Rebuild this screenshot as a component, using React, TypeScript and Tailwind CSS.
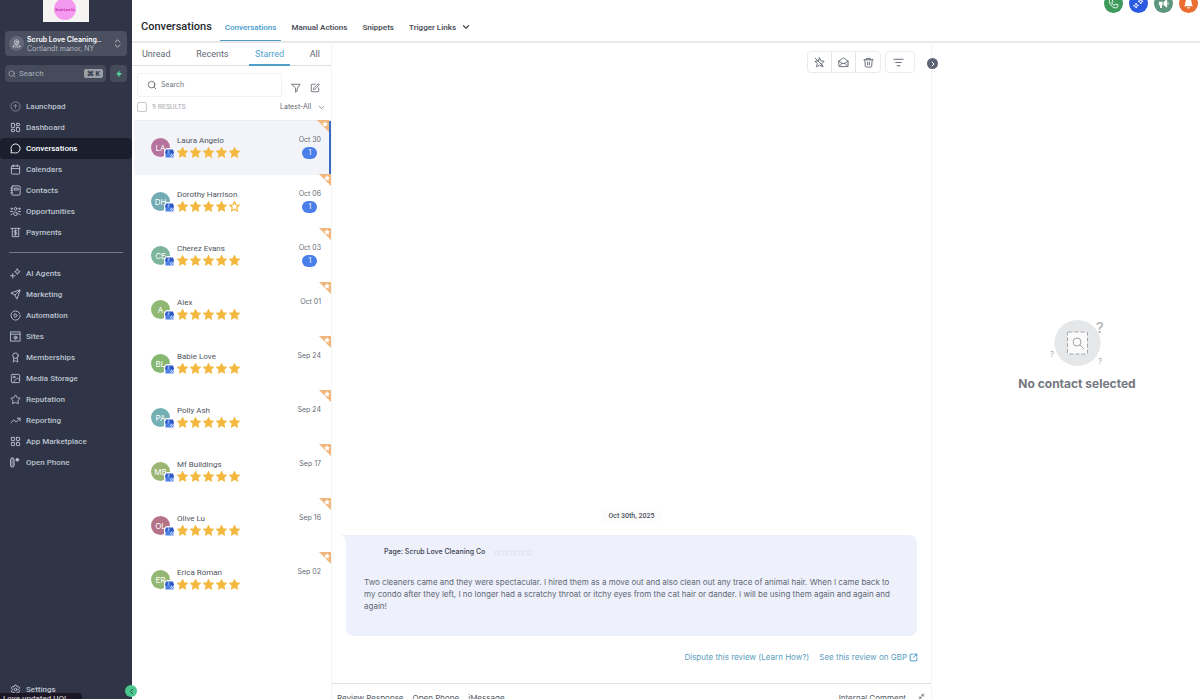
import type { ReactNode } from "react";
import {
  Award,
  Calendar,
  ChevronDown,
  ChevronLeft,
  ChevronRight,
  ChevronsUpDown,
  CircleArrowUp,
  CirclePlay,
  Image as ImageIcon,
  LayoutDashboard,
  LayoutGrid,
  MessageCircle,
  Minimize2,
  Search,
  Send,
  Settings,
  SquareArrowOutUpRight,
  SquarePen,
  Star,
  TrendingUp,
} from "lucide-react";

const starPath =
  "M12 1.8l3.1 6.6 7.1.9-5.2 5 1.3 7.2L12 18l-6.3 3.5L7 14.3l-5.2-5 7.1-.9z";

function Svg({ children, className = "size-[11px]" }: { children: ReactNode; className?: string }) {
  return (
    <svg
      viewBox="0 0 24 24"
      className={className}
      fill="none"
      stroke="currentColor"
      strokeWidth={2}
      strokeLinecap="round"
      strokeLinejoin="round"
      aria-hidden="true"
    >
      {children}
    </svg>
  );
}

const icon = "size-[11px]";

const mainNav = [
  {
    label: "Launchpad",
    icon: <CircleArrowUp className="size-[11px] opacity-60" strokeDasharray="14 2" />,
  },
  { label: "Dashboard", icon: <LayoutDashboard className={icon} /> },
  { label: "Conversations", icon: <MessageCircle className={icon} />, active: true },
  { label: "Calendars", icon: <Calendar className={icon} /> },
  {
    label: "Contacts",
    icon: (
      <Svg>
        <rect x="4" y="2" width="18" height="20" rx="2" />
        <path d="M2 7h4M2 12h4M2 17h4M10 7h8v4h-8z" />
      </Svg>
    ),
  },
  {
    label: "Opportunities",
    icon: (
      <Svg>
        <circle cx="12" cy="6" r="3" />
        <circle cx="12" cy="17" r="4" />
        <circle cx="3.5" cy="6" r="1.5" />
        <circle cx="20.5" cy="6" r="1.5" />
        <path d="M1 12h5M18 12h5M2 19l3-2M22 19l-3-2" />
      </Svg>
    ),
  },
  {
    label: "Payments",
    icon: (
      <Svg>
        <path d="M2 3h20M5 3v18h14V3M15 8h-4a2 2 0 0 0 0 4h2a2 2 0 0 1 0 4H9M12 6v12" />
      </Svg>
    ),
  },
];

const toolsNav = [
  {
    label: "AI Agents",
    icon: (
      <Svg>
        <path d="M16 2l2 4 4 2-4 2-2 4-2-4-4-2 4-2zM6 12v10M1 17h10" />
      </Svg>
    ),
  },
  { label: "Marketing", icon: <Send className={icon} /> },
  { label: "Automation", icon: <CirclePlay className={icon} strokeDasharray="17 3" /> },
  {
    label: "Sites",
    icon: (
      <Svg>
        <path d="M2 2h20v20H2zM2 7h20" />
        <circle cx="12" cy="14.5" r="3.5" />
        <path d="M12 13v3" />
      </Svg>
    ),
  },
  { label: "Memberships", icon: <Award className={icon} /> },
  { label: "Media Storage", icon: <ImageIcon className={icon} /> },
  { label: "Reputation", icon: <Star className={icon} /> },
  { label: "Reporting", icon: <TrendingUp className={icon} /> },
  { label: "App Marketplace", icon: <LayoutGrid className={icon} /> },
  {
    label: "Open Phone",
    icon: (
      <Svg>
        <rect x="1" y="2" width="8" height="20" rx="4" fill="currentColor" fillOpacity={0.4} />
        <circle cx="16" cy="6" r="3" fill="currentColor" />
      </Svg>
    ),
  },
];

const conversations = [
  { name: "Laura Angelo", initials: "LA", date: "Oct 30", color: "bg-[#b5739d]", stars: 5, unread: 1, selected: true },
  { name: "Dorothy Harrison", initials: "DH", date: "Oct 06", color: "bg-[#73abb5]", stars: 4, unread: 1 },
  { name: "Cherez Evans", initials: "CE", date: "Oct 03", color: "bg-[#7cb59a]", stars: 5, unread: 1 },
  { name: "Alex", initials: "A", date: "Oct 01", color: "bg-[#90b873]", stars: 5 },
  { name: "Babie Love", initials: "BL", date: "Sep 24", color: "bg-[#85b873]", stars: 5 },
  { name: "Polly Ash", initials: "PA", date: "Sep 24", color: "bg-[#73b0b3]", stars: 5 },
  { name: "Mf Buildings", initials: "MB", date: "Sep 17", color: "bg-[#9bb573]", stars: 5 },
  { name: "Olive Lu", initials: "OL", date: "Sep 16", color: "bg-[#b57388]", stars: 5 },
  { name: "Erica Roman", initials: "ER", date: "Sep 02", color: "bg-[#94b873]", stars: 5 },
];

function NavItem({ label, icon, active }: { label: string; icon: ReactNode; active?: boolean }) {
  return (
    <a
      href="#"
      className={`flex h-[21px] items-center gap-[5px] rounded-sm pl-[10px] ${
        active ? "bg-[#1a1e2d] text-white" : "text-[#bcc2ce]"
      }`}
    >
      {icon}
      {label}
    </a>
  );
}

function Sidebar() {
  return (
    <aside className="relative flex w-[132px] shrink-0 flex-col bg-[#2f3546] font-['Roboto','Inter',sans-serif] text-[8px] font-medium">
      <div className="mx-auto flex h-[22px] w-[46px] shrink-0 items-end justify-center overflow-hidden bg-[#f6f3f3]">
        <svg viewBox="0 0 46 22" className="h-[22px] w-[46px]" aria-label="Scrub Love Cleaning">
          <circle cx="22" cy="9" r="11" fill="#f39af0" />
          <text x="22" y="11" textAnchor="middle" fontSize="3" fontWeight="700" fill="#c928a8">
            Scrub Love Co
          </text>
        </svg>
      </div>

      <button
        type="button"
        className="mx-[5px] mt-[9px] flex h-[25px] shrink-0 items-center gap-[3px] rounded bg-[#4a5060] px-1 text-left font-['Inter',sans-serif]"
      >
        <span className="flex size-[15px] items-center justify-center rounded-full bg-[#626878] text-[#d3d6dd]">
          <Svg className="size-[9px]">
            <circle cx="12" cy="8" r="6" />
            <circle cx="12" cy="8" r="2" />
            <path d="M6 15l-4 6h20l-4-6M9 14l3 4 3-4" />
          </Svg>
        </span>
        <span className="min-w-0 flex-1 text-[7px] leading-[9px] text-[#b3b7c2]">
          <span className="block font-semibold whitespace-nowrap text-white">Scrub Love Cleaning..</span>
          <span className="block font-normal whitespace-nowrap">Cortlandt manor, NY</span>
        </span>
        <ChevronsUpDown className="size-[11px] text-[#c3c7d0]" />
      </button>

      <div className="mx-[5px] mt-[9px] flex shrink-0 gap-1">
        <label className="flex h-[17px] min-w-0 flex-1 items-center gap-[3px] rounded bg-[#454b5b] px-[3px] text-[#b4b9c5]">
          <Search className="size-[8px] shrink-0" />
          <input
            type="text"
            aria-label="Search menu"
            placeholder="Search"
            className="w-0 flex-1 bg-transparent text-[8px] font-normal outline-none placeholder:text-[#a9afbc]"
          />
          <kbd className="rounded-xs bg-[#9a9faa] px-[3px] font-sans text-[7px] leading-[9px] font-bold text-[#2f3546]">
            ⌘ K
          </kbd>
        </label>
        <button
          type="button"
          aria-label="Quick actions"
          className="flex size-[17px] items-center justify-center rounded bg-[#454b5b] text-[#55d69e]"
        >
          <svg viewBox="0 0 24 24" className="size-[8px]" fill="currentColor">
            <path d="M14 1L3 14h8l-2 9 12-14h-8z" />
          </svg>
        </button>
      </div>

      <nav className="mt-[14px] flex flex-col">
        {mainNav.map((item) => (
          <NavItem key={item.label} {...item} />
        ))}
        <hr className="mx-[9px] mt-[9px] mb-[10px] border-[#737987]" />
        {toolsNav.map((item) => (
          <NavItem key={item.label} {...item} />
        ))}
      </nav>

      <div className="mt-auto -mb-px">
        <NavItem label="Settings" icon={<Settings className={icon} />} />
      </div>
      <div className="absolute bottom-0 left-0 h-[6px] w-[82px] overflow-hidden rounded-tr-sm bg-[#1c1627] pl-[3px] text-[8px] leading-[12px] text-[#c4c2c9]">
        Love updated UQ!
      </div>
      <button
        type="button"
        aria-label="Collapse sidebar"
        className="absolute -right-[5px] bottom-[2px] z-10 flex size-[12px] items-center justify-center rounded-full bg-[#4bc78e] text-[#234a43]"
      >
        <ChevronLeft className="size-[9px]" strokeWidth={2.5} />
      </button>
    </aside>
  );
}

function Header() {
  return (
    <header className="flex h-[43px] shrink-0 items-start border-b-2 border-[#e9e9ea] pl-[9px] font-['Roboto','Inter',sans-serif]">
      <h1 className="pt-[18px] text-[11px] leading-[17px] font-medium text-[#25282d]">Conversations</h1>
      <nav className="ml-2 flex h-[41px] items-stretch text-[8px] leading-[14px] font-semibold whitespace-nowrap text-[#4d525a]">
        <a href="#" className="border-b border-[#529cca] px-[5px] pt-[21px] text-[#529fcf]">
          Conversations
        </a>
        <a href="#" className="ml-[10px] pt-[21px]">
          Manual Actions
        </a>
        <a href="#" className="ml-[15px] pt-[21px]">
          Snippets
        </a>
        <a href="#" className="ml-[15px] flex gap-[5px] pt-[21px]">
          Trigger Links
          <ChevronDown className="mt-px size-[10px]" strokeWidth={3} />
        </a>
      </nav>
      <div className="-mt-[6px] ml-auto flex gap-[6px] pr-[2px] text-white">
        <button type="button" aria-label="Call" className="flex size-[19px] items-center justify-center rounded-full bg-[#3d9a5a]">
          <Svg>
            <path d="M5 3l4-1 2 6-3 2c1 3 3 5 6 6l2-3 6 2-1 4c-1 3-5 3-8 2C9 19 4 14 3 8c0-2 0-4 2-5z" />
          </Svg>
        </button>
        <button type="button" aria-label="AI assistant" className="flex size-[19px] items-center justify-center rounded-full bg-[#2b5ae0]">
          <Svg>
            <path d="M17 2l1 4 4 1-4 2-1 4-2-4-4-2 4-1zM7 12l1 3 4 1-4 2-1 4-2-4-4-1 4-2z" />
          </Svg>
        </button>
        <button type="button" aria-label="Announcements" className="flex size-[19px] items-center justify-center rounded-full bg-[#5d967f]">
          <svg viewBox="0 0 24 24" className={icon} fill="currentColor">
            <path d="M2 8h8v8H8l1 6H5l-1-6H2zM12 8l8-5v18l-8-5zM21 10h2v4h-2z" />
          </svg>
        </button>
        <button type="button" aria-label="Notifications" className="flex size-[19px] items-center justify-center rounded-full bg-[#ec6d30]">
          <svg viewBox="0 0 24 24" className={icon} fill="currentColor">
            <path d="M12 2c5 0 7 4 7 8 0 4 1 6 3 8H2c2-2 3-4 3-8 0-4 2-8 7-8zM9 20h6c0 4-6 4-6 0z" />
          </svg>
        </button>
      </div>
    </header>
  );
}

function Rating({ value }: { value: number }) {
  return (
    <div className="flex gap-[2px] text-[#f4b83f]" role="img" aria-label={`${value} of 5 stars`}>
      {[1, 2, 3, 4, 5].map((n) => (
        <svg key={n} viewBox="0 0 24 24" className="size-[11px]" stroke="currentColor" strokeWidth={2.5} fill={n <= value ? "currentColor" : "none"}>
          <path d={starPath} />
        </svg>
      ))}
    </div>
  );
}

function ConversationRow({ name, initials, date, color, stars, unread, selected }: (typeof conversations)[number]) {
  return (
    <li
      className={`relative flex h-[54px] pt-[14px] pl-[17px] ${
        selected ? "border-r-2 border-[#3b6cc4] bg-[#f2f4f9] pr-[8px]" : "pr-[10px]"
      }`}
    >
      <div className={`relative mt-[3px] flex size-[19px] items-center justify-center rounded-full text-[8px] text-white ${color}`}>
        {initials}
        <span className="absolute -right-1 -bottom-px rounded-tl-sm bg-white pt-px pl-px">
          <svg viewBox="0 0 18 18" className="size-[9px]">
            <path d="M1 6h16v11H1z" fill="#4b7fe8" />
            <path d="M2 1h14l2 6c0 3-4 3-4.500 0C13 10 9 10 9 7c0 3-4 3-4.500 0C4 10 0 10 0 7z" fill="#2e57c4" />
            <path d="M6 1h3v6c0 3-4 3-4 0z" fill="#7ea6f5" />
            <circle cx="13" cy="13" r="2" fill="none" stroke="#fff" strokeWidth="1.3" />
          </svg>
        </span>
      </div>
      <div className="ml-[7px] flex-1">
        <div className="pb-px font-['Roboto','Inter',sans-serif] text-[8px] leading-[11px] text-[#4f5560]">{name}</div>
        <Rating value={stars} />
      </div>
      <div className="flex flex-col items-center text-[7px] leading-[10px] text-[#666c76]">
        {date}
        {unread && (
          <span className="mt-[2px] w-[15px] rounded-full bg-[#4a7eea] text-center text-[7px] leading-[12px] text-white">
            {unread}
          </span>
        )}
      </div>
      <svg viewBox="0 0 12 12" className="absolute -top-px right-0 size-[12px]" aria-hidden="true">
        <path d="M0 0h12v12z" fill="#f0b67c" />
        <path d="M8 1l.9 1.900 2.100.3-1.500 1.500.4 2.100L8 5.800l-1.900 1 .4-2.100L5 3.200l2.100-.3z" fill="#fff" />
      </svg>
    </li>
  );
}

function ConversationList() {
  return (
    <section className="flex w-[200px] shrink-0 flex-col border-r border-[#f3f4f6]">
      <nav className="flex h-[23px] shrink-0 items-stretch justify-between border-b border-[#dcdee2] pr-[11px] pl-[5px] font-['Roboto','Inter',sans-serif] text-[9px] leading-[22px] text-[#646a74]">
        <a href="#" className="px-[5px]">Unread</a>
        <a href="#" className="px-[5px]">Recents</a>
        <a href="#" className="-mb-px border-b-2 border-[#529cca] px-[6px] text-[#529fcf]">Starred</a>
        <a href="#" className="pl-1">All</a>
      </nav>
      <div className="mt-[7px] flex h-[24px] shrink-0 items-center gap-[9px] pr-[11px] pl-[5px]">
        <label className="flex h-[24px] min-w-0 flex-1 items-center gap-[4px] rounded-xs border border-[#f1f2f4] pl-[9px] text-[#5b616b]">
          <Search className="size-[10px] shrink-0" />
          <input
            type="text"
            aria-label="Search conversations"
            placeholder="Search"
            className="w-0 flex-1 bg-transparent text-[7px] outline-none placeholder:text-[#71767f]"
          />
        </label>
        <button type="button" aria-label="Filter" className="mt-[5px] text-[#5b616b]">
          <Svg className="size-[10px]">
            <path d="M2 3h20l-7 10v6l-4 3v-9z" />
          </Svg>
        </button>
        <button type="button" aria-label="New message" className="mt-[5px] text-[#5b616b]">
          <SquarePen className="size-[10px]" />
        </button>
      </div>
      <div className="flex h-[20px] shrink-0 items-center justify-between pr-[5px] pl-[5px]">
        <label className="flex items-center gap-[5px] font-['Roboto','Inter',sans-serif] text-[7px] text-[#a7abb2]">
          <input type="checkbox" className="size-[10px] appearance-none rounded-xs border border-[#c3c6cc] bg-white" />
          9 RESULTS
        </label>
        <div className="flex items-center text-[#646a74]">
          <select aria-label="Sort" className="appearance-none bg-transparent text-[7px]">
            <option>Latest-All</option>
          </select>
          <ChevronDown className="ml-[5px] size-[9px]" />
        </div>
      </div>
      <ul className="mt-[3px] ml-[2px] border-t border-[#eaecf0]">
        {conversations.map((c) => (
          <ConversationRow key={c.name} {...c} />
        ))}
      </ul>
    </section>
  );
}

function Thread() {
  return (
    <section className="flex min-w-0 flex-1 flex-col text-[8px]">
      <div className="flex justify-end gap-1 pt-[8px] pr-[16px] text-[#5d636e]">
        <div className="flex h-[22px] divide-x divide-[#e1e4e8] rounded border border-[#e9ebee]">
          <button type="button" aria-label="Unstar" className="flex w-[24px] items-center justify-center">
            <Svg>
              <path d="M12 2l3 6.500 7 .8-5 5 1.300 7L12 18l-6.300 3.300L7 14.300l-5-5 7-.8zM3 3l17 17" />
            </Svg>
          </button>
          <button type="button" aria-label="Mark as unread" className="flex w-[24px] items-center justify-center">
            <Svg>
              <path d="M2 9l8-6c1-1 3-1 4 0l8 6v10a2 2 0 0 1-2 2H4a2 2 0 0 1-2-2zM2 9l7 5h6l7-5M3 20l6-6M21 20l-6-6" />
            </Svg>
          </button>
          <button type="button" aria-label="Delete" className="flex w-[24px] items-center justify-center">
            <Svg>
              <path d="M2 6h20M8 6V3h8v3M4 6l1 14a2 2 0 0 0 2 2h10a2 2 0 0 0 2-2l1-14M10 11v6M14 11v6" />
            </Svg>
          </button>
        </div>
        <button type="button" aria-label="Filter thread" className="flex h-[22px] w-[30px] items-center justify-center rounded border border-[#e9ebee] pr-[3px]">
          <Svg>
            <path d="M2 5h20M6 12h12M9 19h6" />
          </Svg>
        </button>
      </div>

      <div className="mt-auto flex justify-center">
        <time className="rounded-full bg-[#fcfcfd] px-2 font-['Roboto','Inter',sans-serif] text-[7px] leading-[14px] font-medium text-[#4c525c]">
          Oct 30th, 2025
        </time>
      </div>

      <article className="relative mt-[12px] mr-[14px] ml-[14px] h-[101px] rounded-lg rounded-tl-none bg-[#eef1fc] pr-[18px] pl-[18px]">
        <svg viewBox="0 0 6 8" className="absolute top-0 -left-[5px] h-[8px] w-[6px]" aria-hidden="true">
          <path d="M0 0h6v8H5C5 4 3 2 0 0z" fill="#eef1fc" />
        </svg>
        <div className="flex items-center gap-[9px] pt-[10px] pl-[20px] text-[7px] leading-[14px] font-medium text-[#3d434e]">
          Page: Scrub Love Cleaning Co
          <span className="flex gap-px text-[#cfd4df]">
            {[1, 2, 3, 4, 5].map((n) => (
              <Star key={n} className="size-[7px]" strokeWidth={1.5} />
            ))}
          </span>
        </div>
        <p className="mt-[17px] leading-[12px] text-[#616773]">
          Two cleaners came and they were spectacular. I hired them as a move out and also clean out any trace of animal
          hair. When I came back to my condo after they left, I no longer had a scratchy throat or itchy eyes from the
          cat hair or dander. I will be using them again and again and again!
        </p>
      </article>

      <div className="mt-[15px] mr-[13px] flex justify-end gap-[10px] leading-[12px] text-[#5b9dbd]">
        <a href="#">Dispute this review (Learn How?)</a>
        <a href="#" className="flex items-center gap-[2px]">
          See this review on GBP
          <SquareArrowOutUpRight className="size-[9px] text-[#3c93c4]" strokeWidth={2.5} />
        </a>
      </div>

      <footer className="mt-5 flex h-[16px] shrink-0 items-start overflow-hidden border-t border-[#dfe2e6] pt-[9px] pr-[6px] pl-[5px] leading-[10px] text-[#555b66]">
        <button type="button">Review Response</button>
        <button type="button" className="ml-[9px]">Open Phone</button>
        <button type="button" className="ml-[9px]">iMessage</button>
        <button type="button" className="ml-auto">Internal Comment</button>
        <button type="button" aria-label="Expand" className="ml-[12px]">
          <Minimize2 className="size-[7px]" strokeWidth={2.5} />
        </button>
      </footer>
    </section>
  );
}

function ContactPanel() {
  return (
    <aside className="relative flex w-[269px] shrink-0 flex-col items-center justify-center border-l border-[#f4f5f6] pb-[32px]">
      <button
        type="button"
        aria-label="Hide contact panel"
        className="absolute top-[15px] -left-[5px] flex size-[11px] items-center justify-center rounded-full bg-[#5e6473] text-white"
      >
        <ChevronRight className="size-[8px]" strokeWidth={3} />
      </button>
      <div className="flex w-full flex-col items-center pl-[22px]">
        <svg viewBox="0 0 60 48" className="h-[48px] w-[60px]" fill="none" aria-hidden="true">
          <circle cx="30.5" cy="24" r="23" fill="#e5e7e9" />
          <rect x="20.5" y="13" width="20" height="22" rx="1" fill="#fbfbfb" stroke="#a3a6ab" strokeDasharray="4 2" />
          <circle cx="30" cy="23" r="4" stroke="#a3a6ab" />
          <path d="M33 26l4 4" stroke="#a3a6ab" strokeLinecap="round" />
          <g fill="#a8abb0">
            <text x="49" y="14" fontSize="15">?</text>
            <text x="3" y="38" fontSize="8">?</text>
            <text x="51" y="45" fontSize="8">?</text>
          </g>
        </svg>
        <h2 className="mt-[9px] text-[12px] leading-[16px] font-bold text-[#74777d]">No contact selected</h2>
      </div>
    </aside>
  );
}

export default function App() {
  return (
    <div className="flex h-screen overflow-hidden bg-white font-['Inter','Liberation_Sans',sans-serif]">
      <Sidebar />
      <div className="flex min-w-0 flex-1 flex-col">
        <Header />
        <main className="flex min-h-0 flex-1">
          <ConversationList />
          <Thread />
          <ContactPanel />
        </main>
      </div>
    </div>
  );
}
